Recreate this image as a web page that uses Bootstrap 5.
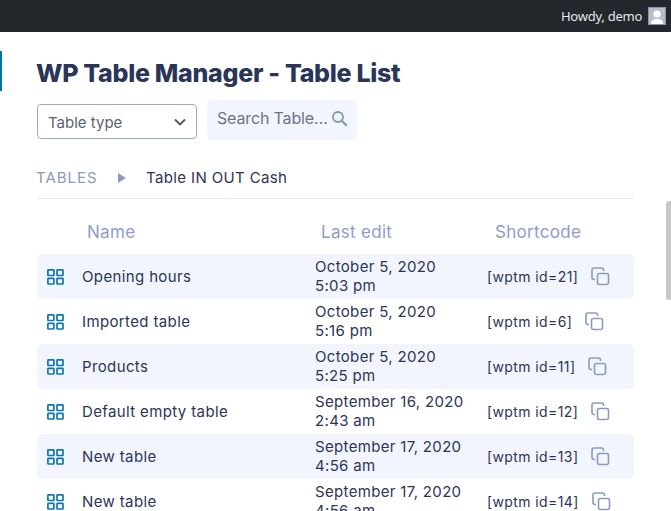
<!DOCTYPE html>
<html lang="en"><head><meta charset="utf-8"><title>Table List</title>
<link rel="stylesheet" href="https://cdn.jsdelivr.net/npm/bootstrap@5.3.0/dist/css/bootstrap.min.css">
<style>
html,body{height:511px;overflow:hidden;background:#fff}
body{font-family:Inter,"Liberation Sans",sans-serif;color:#2b3557;font-size:15px;letter-spacing:.37px}
.adminbar{height:32px;background:#23282d;color:#e4e6e8;font:13px/32px "Noto Sans",sans-serif;padding-right:5px;gap:6px;letter-spacing:-.25px}
.ava{width:18px;height:18px;background:#b9bec9;border:1px solid #8c93a3;overflow:hidden}
.pagewrap{padding:19px 37px 0;box-sizing:content-box;width:597px}
.marker{position:absolute;left:0;top:51px;width:2px;height:40px;background:#0073aa}
.ttl{font:800 25px/1.2 Inter,sans-serif;color:#2b3557;margin:7px 0 0 -1px;height:30px;letter-spacing:-.3px}
.filters{margin-top:12px;gap:10px}
.typesel{width:160px;height:35px;margin-top:4px;border:1px solid #9aaabf;border-radius:4px;padding:3px 10px 0;color:#5c6470;font-size:15px;letter-spacing:0}
.typesel svg{margin-top:-3px}
.searchbox{width:150px;height:40px;background:#f2f5fd;border-radius:5px;padding:0 9px 4px 10px;color:#6c7488;font-size:16px;letter-spacing:-.15px}
.crumbs{margin-top:18px;height:41px;border-bottom:1px solid #e9ebf0;line-height:20px}
.crumb1{color:#8b9abf;width:81px;letter-spacing:1px;margin-left:-1px;margin-right:1px}
.tri{width:0;height:0;border-left:8px solid #8b9abf;border-top:5px solid transparent;border-bottom:5px solid transparent;margin-right:20px}
.heads{height:56px;color:#8d9ccb;font-size:17px;padding-top:21px;line-height:24px;letter-spacing:.3px}
.c1{width:278px;flex:none}.c2{width:172px;flex:none}
.heads .c1{padding-left:50px;width:284px}.heads .c2{width:174px}
.trow{height:45px;border-radius:5px;line-height:18px}
.trow:nth-child(odd){background:#f2f5fd}
.trow .c1{gap:18px;padding-left:10px}
.trow .c2{line-height:19px;font-size:15px;padding-bottom:2px;letter-spacing:.33px}
.sc{font-size:14px;gap:13px;letter-spacing:.4px}
.track{position:absolute;right:0;top:201px;width:5px;height:99px;background:#c8c8c8;border-radius:3px 0 0 3px}
.rowsbox{margin-top:-1px}
</style></head><body>
<div class="adminbar d-flex justify-content-end align-items-center">
<span>Howdy, demo</span>
<span class="ava d-block"><svg width="16" height="16" viewBox="0 0 16 16" class="d-block"><circle cx="8" cy="6" r="3.6" fill="#fff"/><path d="M2 16c0-4 3-5 6-5s6 1 6 5z" fill="#fff"/></svg></span>
</div>
<div class="marker"></div>
<div class="pagewrap">
<h1 class="ttl">WP Table Manager - Table List</h1>
<div class="filters d-flex">
<div class="typesel d-flex align-items-center justify-content-between"><span>Table type</span>
<svg width="12" height="8" viewBox="0 0 12 8"><path d="M1 1.5l5 5 5-5" fill="none" stroke="#50575e" stroke-width="1.8"/></svg></div>
<div class="searchbox d-flex align-items-center justify-content-between"><span>Search Table…</span>
<svg width="17" height="17" viewBox="0 0 17 17"><circle cx="7" cy="7" r="5" fill="none" stroke="#7d97ab" stroke-width="1.8"/><path d="M10.8 10.8l5 5" stroke="#7d97ab" stroke-width="2"/></svg></div>
</div>
<div class="crumbs d-flex align-items-center"><span class="crumb1">TABLES</span><span class="tri"></span><span>Table IN OUT Cash</span></div>
<div class="heads d-flex"><div class="c1">Name</div><div class="c2">Last edit</div><div>Shortcode</div></div>
<div class="rowsbox">
<div class="trow d-flex align-items-center"><div class="c1 d-flex align-items-center"><svg class="gridic" width="17" height="16" viewBox="0 0 17 16"><g fill="none" stroke="#0f76ac" stroke-width="1.7"><rect x=".9" y=".9" width="6" height="5.6" rx=".6"/><rect x="10" y=".9" width="6" height="5.6" rx=".6"/><rect x=".9" y="9.4" width="6" height="5.6" rx=".6"/><rect x="10" y="9.4" width="6" height="5.6" rx=".6"/></g></svg><span>Opening hours</span></div><div class="c2">October 5, 2020<br>5:03 pm</div><div class="sc d-flex align-items-center"><span>[wptm id=21]</span><svg width="19" height="19" viewBox="0 0 19 19" fill="none" stroke="#8a9bc0" stroke-width="1.6"><rect x="6.5" y="6.5" width="11" height="11" rx="2"/><path d="M4 12.5H3a2 2 0 0 1-2-2V3a2 2 0 0 1 2-2h7.5a2 2 0 0 1 2 2v1"/></svg></div></div>
<div class="trow d-flex align-items-center"><div class="c1 d-flex align-items-center"><svg class="gridic" width="17" height="16" viewBox="0 0 17 16"><g fill="none" stroke="#0f76ac" stroke-width="1.7"><rect x=".9" y=".9" width="6" height="5.6" rx=".6"/><rect x="10" y=".9" width="6" height="5.6" rx=".6"/><rect x=".9" y="9.4" width="6" height="5.6" rx=".6"/><rect x="10" y="9.4" width="6" height="5.6" rx=".6"/></g></svg><span>Imported table</span></div><div class="c2">October 5, 2020<br>5:16 pm</div><div class="sc d-flex align-items-center"><span>[wptm id=6]</span><svg width="19" height="19" viewBox="0 0 19 19" fill="none" stroke="#8a9bc0" stroke-width="1.6"><rect x="6.5" y="6.5" width="11" height="11" rx="2"/><path d="M4 12.5H3a2 2 0 0 1-2-2V3a2 2 0 0 1 2-2h7.5a2 2 0 0 1 2 2v1"/></svg></div></div>
<div class="trow d-flex align-items-center"><div class="c1 d-flex align-items-center"><svg class="gridic" width="17" height="16" viewBox="0 0 17 16"><g fill="none" stroke="#0f76ac" stroke-width="1.7"><rect x=".9" y=".9" width="6" height="5.6" rx=".6"/><rect x="10" y=".9" width="6" height="5.6" rx=".6"/><rect x=".9" y="9.4" width="6" height="5.6" rx=".6"/><rect x="10" y="9.4" width="6" height="5.6" rx=".6"/></g></svg><span>Products</span></div><div class="c2">October 5, 2020<br>5:25 pm</div><div class="sc d-flex align-items-center"><span>[wptm id=11]</span><svg width="19" height="19" viewBox="0 0 19 19" fill="none" stroke="#8a9bc0" stroke-width="1.6"><rect x="6.5" y="6.5" width="11" height="11" rx="2"/><path d="M4 12.5H3a2 2 0 0 1-2-2V3a2 2 0 0 1 2-2h7.5a2 2 0 0 1 2 2v1"/></svg></div></div>
<div class="trow d-flex align-items-center"><div class="c1 d-flex align-items-center"><svg class="gridic" width="17" height="16" viewBox="0 0 17 16"><g fill="none" stroke="#0f76ac" stroke-width="1.7"><rect x=".9" y=".9" width="6" height="5.6" rx=".6"/><rect x="10" y=".9" width="6" height="5.6" rx=".6"/><rect x=".9" y="9.4" width="6" height="5.6" rx=".6"/><rect x="10" y="9.4" width="6" height="5.6" rx=".6"/></g></svg><span>Default empty table</span></div><div class="c2">September 16, 2020<br>2:43 am</div><div class="sc d-flex align-items-center"><span>[wptm id=12]</span><svg width="19" height="19" viewBox="0 0 19 19" fill="none" stroke="#8a9bc0" stroke-width="1.6"><rect x="6.5" y="6.5" width="11" height="11" rx="2"/><path d="M4 12.5H3a2 2 0 0 1-2-2V3a2 2 0 0 1 2-2h7.5a2 2 0 0 1 2 2v1"/></svg></div></div>
<div class="trow d-flex align-items-center"><div class="c1 d-flex align-items-center"><svg class="gridic" width="17" height="16" viewBox="0 0 17 16"><g fill="none" stroke="#0f76ac" stroke-width="1.7"><rect x=".9" y=".9" width="6" height="5.6" rx=".6"/><rect x="10" y=".9" width="6" height="5.6" rx=".6"/><rect x=".9" y="9.4" width="6" height="5.6" rx=".6"/><rect x="10" y="9.4" width="6" height="5.6" rx=".6"/></g></svg><span>New table</span></div><div class="c2">September 17, 2020<br>4:56 am</div><div class="sc d-flex align-items-center"><span>[wptm id=13]</span><svg width="19" height="19" viewBox="0 0 19 19" fill="none" stroke="#8a9bc0" stroke-width="1.6"><rect x="6.5" y="6.5" width="11" height="11" rx="2"/><path d="M4 12.5H3a2 2 0 0 1-2-2V3a2 2 0 0 1 2-2h7.5a2 2 0 0 1 2 2v1"/></svg></div></div>
<div class="trow d-flex align-items-center"><div class="c1 d-flex align-items-center"><svg class="gridic" width="17" height="16" viewBox="0 0 17 16"><g fill="none" stroke="#0f76ac" stroke-width="1.7"><rect x=".9" y=".9" width="6" height="5.6" rx=".6"/><rect x="10" y=".9" width="6" height="5.6" rx=".6"/><rect x=".9" y="9.4" width="6" height="5.6" rx=".6"/><rect x="10" y="9.4" width="6" height="5.6" rx=".6"/></g></svg><span>New table</span></div><div class="c2">September 17, 2020<br>4:56 am</div><div class="sc d-flex align-items-center"><span>[wptm id=14]</span><svg width="19" height="19" viewBox="0 0 19 19" fill="none" stroke="#8a9bc0" stroke-width="1.6"><rect x="6.5" y="6.5" width="11" height="11" rx="2"/><path d="M4 12.5H3a2 2 0 0 1-2-2V3a2 2 0 0 1 2-2h7.5a2 2 0 0 1 2 2v1"/></svg></div></div>
</div>
</div>
<div class="track"></div>
<script src="https://cdn.jsdelivr.net/npm/bootstrap@5.3.0/dist/js/bootstrap.bundle.min.js"></script>
</body></html>
